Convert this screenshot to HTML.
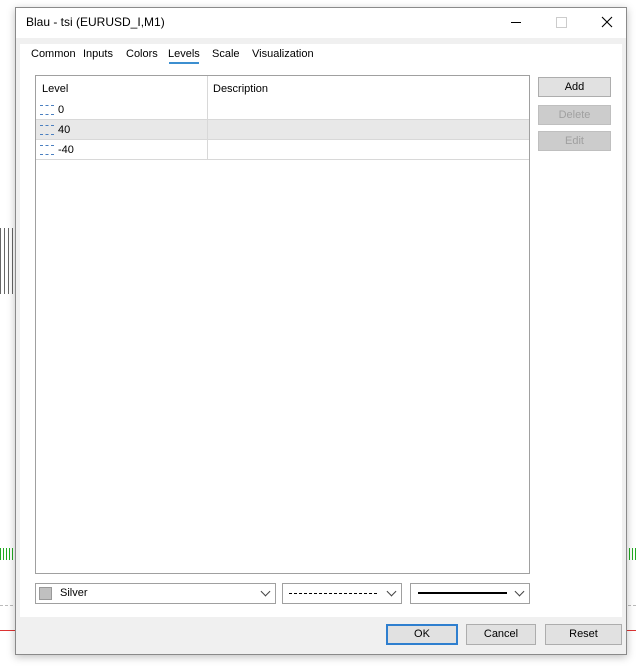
<!DOCTYPE html>
<html><head><style>
body{margin:0;width:636px;height:666px;background:#fff;position:relative;overflow:hidden;font-family:"Liberation Sans",sans-serif;font-size:11px;color:#000}
.a{position:absolute}
.btn{position:absolute;background:#e1e1e1;border:1px solid #adadad;box-sizing:border-box;text-align:center;line-height:18px}
.dis{color:#a0a0a0;background:#cccccc;border-color:#bfbfbf}
.row{position:absolute;left:36px;width:493px;height:20px;border-bottom:1px solid #d8d8d8;box-sizing:border-box}
.dash{position:absolute;left:4px;top:5px;width:14px;height:8px;border-top:1px dashed #4a7fc0;border-bottom:1px dashed #4a7fc0}
.combo{position:absolute;top:583px;height:21px;border:1px solid #a0a0a0;box-sizing:border-box;background:#fff}
.chev{position:absolute;right:6px;top:4px;width:6px;height:6px;border-right:1px solid #444;border-bottom:1px solid #444;transform:rotate(45deg)}
</style></head><body>
<div class="a" style="left:0;top:228px;width:14px;height:66px;background:repeating-linear-gradient(90deg,#000 0 1px,transparent 1px 4px);opacity:.6"></div>
<div class="a" style="left:0;top:548px;width:16px;height:12px;background:repeating-linear-gradient(90deg,#2a2 0 1px,transparent 1px 3px)"></div>
<div class="a" style="left:626px;top:548px;width:10px;height:12px;background:repeating-linear-gradient(90deg,#2a2 0 1px,transparent 1px 3px)"></div>
<div class="a" style="left:0;top:630px;width:636px;height:1px;background:#d33"></div>
<div class="a" style="left:0;top:605px;width:636px;border-top:1px dashed #bbb"></div>
<div class="a" style="left:15px;top:7px;width:610px;height:646px;background:#f0f0f0;border:1px solid #8a8a8a;box-shadow:0 2px 8px rgba(0,0,0,.25)"></div>
<div class="a" style="left:16px;top:8px;width:610px;height:30px;background:#fff"></div>
<div class="a" style="left:26px;top:15px;font-size:12px">Blau - tsi (EURUSD_I,M1)</div>
<div class="a" style="left:511px;top:22px;width:10px;height:1px;background:#000"></div>
<div class="a" style="left:556px;top:17px;width:9px;height:9px;border:1px solid #ccc"></div>
<svg class="a" style="left:601px;top:16px" width="12" height="12"><path d="M1 1L11 11M11 1L1 11" stroke="#000" stroke-width="1.1"/></svg>
<div class="a" style="left:20px;top:44px;width:602px;height:573px;background:#fff"></div>
<div class="a" style="left:31px;top:48px">Common</div>
<div class="a" style="left:83px;top:48px">Inputs</div>
<div class="a" style="left:126px;top:48px">Colors</div>
<div class="a" style="left:168px;top:48px">Levels</div>
<div class="a" style="left:169px;top:62px;width:30px;height:2px;background:#3c8fd0"></div>
<div class="a" style="left:212px;top:48px">Scale</div>
<div class="a" style="left:252px;top:48px">Visualization</div>
<div class="a" style="left:35px;top:75px;width:495px;height:499px;border:1px solid #a0a0a0;box-sizing:border-box;background:#fff"></div>
<div class="a" style="left:207px;top:76px;width:1px;height:84px;background:#d8d8d8"></div>
<div class="a" style="left:42px;top:83px">Level</div>
<div class="a" style="left:213px;top:83px">Description</div>
<div class="row" style="top:100px"><div class="dash"></div><span class="a" style="left:22px;top:4px">0</span></div>
<div class="row" style="top:120px;background:#e8e8e8"><div class="dash"></div><span class="a" style="left:22px;top:4px">40</span></div>
<div class="row" style="top:140px"><div class="dash"></div><span class="a" style="left:22px;top:4px">-40</span></div>
<div class="a" style="left:207px;top:100px;width:1px;height:60px;background:#d8d8d8"></div>
<div class="btn" style="left:538px;top:77px;width:73px;height:20px">Add</div>
<div class="btn dis" style="left:538px;top:105px;width:73px;height:20px">Delete</div>
<div class="btn dis" style="left:538px;top:131px;width:73px;height:20px">Edit</div>
<div class="combo" style="left:35px;width:241px"><div class="a" style="left:3px;top:3px;width:11px;height:11px;background:#c0c0c0;border:1px solid #999"></div><span class="a" style="left:24px;top:3px">Silver</span><div class="chev"></div></div>
<div class="combo" style="left:282px;width:120px"><div class="a" style="left:6px;top:9px;width:88px;border-top:1px dashed #000"></div><div class="chev"></div></div>
<div class="combo" style="left:410px;width:120px"><div class="a" style="left:7px;top:8px;width:89px;height:2px;background:#000"></div><div class="chev"></div></div>
<div class="btn" style="left:386px;top:624px;width:72px;height:21px;border:2px solid #2f7fcf;line-height:17px">OK</div>
<div class="btn" style="left:466px;top:624px;width:70px;height:21px">Cancel</div>
<div class="btn" style="left:545px;top:624px;width:77px;height:21px">Reset</div>
</body></html>
